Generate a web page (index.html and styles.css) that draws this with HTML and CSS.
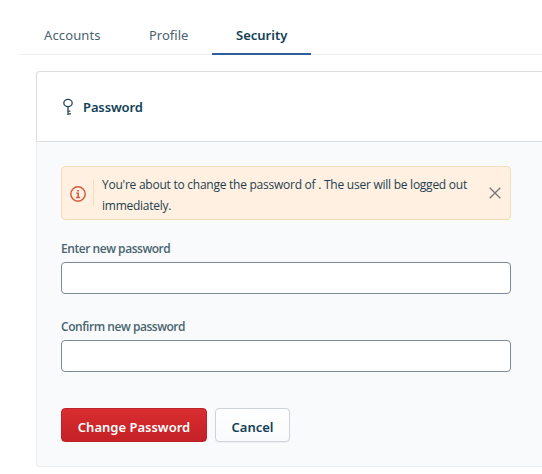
FILE: index.html
```html
<!DOCTYPE html>
<html lang="en">
<head>
<meta charset="utf-8">
<title>Security</title>
<link rel="stylesheet" href="styles.css">
</head>
<body>
<nav class="tabs">
  <a class="tab tab-accounts"><span>Accounts</span></a>
  <a class="tab tab-profile"><span>Profile</span></a>
  <a class="tab tab-active"><span>Security</span></a>
</nav>
<section class="card">
  <header class="card-head">
    <svg class="key" viewBox="0 0 12 18" width="12" height="18" fill="none" stroke="#23475a" stroke-width="1.3">
      <ellipse cx="6" cy="5" rx="4.2" ry="3.7"/>
      <path d="M6 8.7V17M6 13.1H8.4M6 15.9H9"/>
    </svg>
    <h2 class="title">Password</h2>
  </header>
  <form class="card-body">
    <div class="alert">
      <svg class="info" viewBox="0 0 16 16" width="16" height="16" fill="none" stroke="#d35a3d" stroke-width="1.5">
        <circle cx="8" cy="8" r="7.2"/>
        <path d="M6.3 7.2H8.2V11.4M6 11.5H10.1"/>
        <path d="M7.1 4.7H8.9" stroke-width="1.6"/>
      </svg>
      <p class="alert-text">You're about to change the password of . The user will be logged out<br><span class="second">immediately.</span></p>
      <svg class="close" viewBox="0 0 12 12" width="12" height="12" fill="none" stroke="#747775" stroke-width="1.3">
        <path d="M.7.7l10.6 10.6M11.3.7L.7 11.3"/>
      </svg>
    </div>
    <label class="label label-new" for="new">Enter new password</label>
    <input class="input" id="new" type="password">
    <label class="label label-confirm" for="confirm">Confirm new password</label>
    <input class="input" id="confirm" type="password">
    <div class="actions">
      <button class="btn btn-danger" type="button">Change Password</button>
      <button class="btn btn-plain" type="button">Cancel</button>
    </div>
  </form>
</section>
</body>
</html>
```
FILE: styles.css
```css
* { box-sizing: border-box; }
body {
  margin: 0;
  background: #fff;
  color: #123f55;
  font-family: "Noto Sans", "Open Sans", sans-serif;
  font-size: 13px;
}
.tabs {
  display: flex;
  margin-left: 20px;
  height: 55px;
  padding-top: 16px;
  box-shadow: inset 0 -1px #ebedef;
}
.tab {
  height: 39px;
  padding: 0 24px;
  line-height: 38px;
  color: #49636f;
  white-space: nowrap;
}
.tab-accounts { width: 105px; letter-spacing: .12px; }
.tab-profile { width: 87px; }
.tab-active {
  width: 99px;
  color: #123f55;
  font-weight: 600;
  border-bottom: 2px solid #2f5d9c;
}
.card {
  height: 396px;
  margin: 16px 0 0 36px;
  border: 1px solid #ebedef;
  border-right: 0;
  border-radius: 4px 0 0 4px;
  background: #f8fafc;
}
.card-head {
  display: flex;
  align-items: center;
  height: 71px;
  margin: -1px 0 0 -1px;
  padding-left: 25px;
  border: 1px solid #dcdee0;
  border-right: 0;
  border-radius: 4px 0 0 0;
  background: #fff;
}
.title {
  margin: 1px 0 0 9px;
  font-size: 13px;
  font-weight: 600;
  letter-spacing: -.12px;
}
.card-body { width: 450px; margin: 24px 0 0 24px; }
.alert {
  display: flex;
  align-items: center;
  height: 54px;
  padding: 0 9px 0 8px;
  border: 1px solid #f6ddb9;
  border-radius: 4px;
  background: #fff0e1;
}
.info { margin-top: 2px; }
.alert-text {
  position: relative;
  flex: 1;
  margin: 4px 0 0 7px;
  padding-left: 9px;
  color: #1d3f50;
  font-family: "Open Sans", "Noto Sans", sans-serif;
  font-size: 12px;
  line-height: 21px;
  letter-spacing: -.25px;
  white-space: nowrap;
}
.alert-text::before {
  content: "";
  position: absolute;
  left: 0;
  top: 6px;
  height: 26px;
  border-left: 1px solid #f8dcbc;
}
.label {
  display: block;
  height: 42px;
  padding-top: 20px;
  color: #49656f;
  font-family: "Open Sans", "Noto Sans", sans-serif;
  font-size: 12px;
  line-height: 18px;
  font-weight: 600;
  letter-spacing: -.46px;
  white-space: nowrap;
}
.label-confirm { height: 46px; padding-top: 24px; }
.input {
  display: block;
  width: 450px;
  height: 32px;
  border: 1px solid #7c8998;
  border-radius: 4px;
  background: #fff;
}
.actions { display: flex; gap: 8px; margin-top: 36px; }
.btn {
  height: 34px;
  padding: 4px 0 0;
  border-radius: 4px;
  font: 600 13px "Noto Sans", "Open Sans", sans-serif;
  white-space: nowrap;
}
.btn-danger {
  width: 146px;
  border: 1px solid #bd2328;
  background: linear-gradient(#d92d30, #c42126);
  color: #fff;
}
.btn-plain {
  width: 75px;
  border: 1px solid #cdd3d8;
  background: linear-gradient(#fff, #f8fafb);
  color: #123f55;
  box-shadow: 0 1px 1px #0000000d;
}
```
